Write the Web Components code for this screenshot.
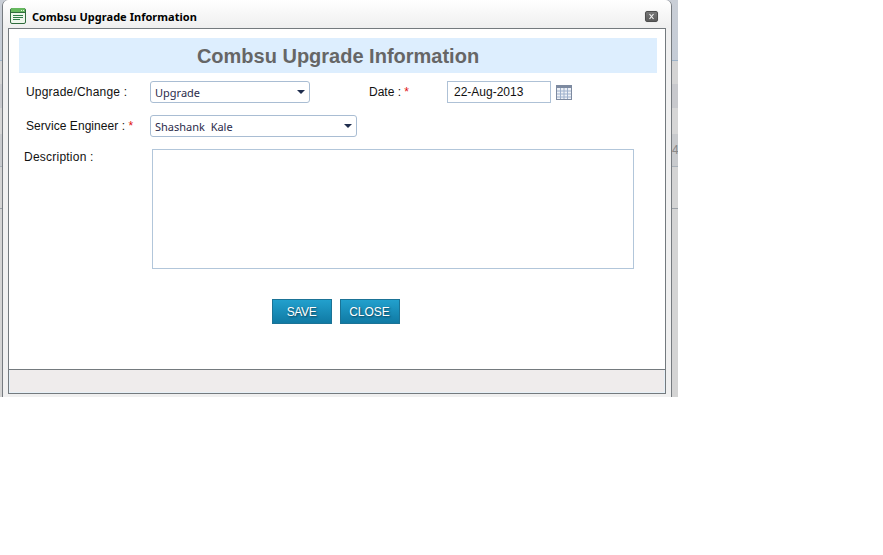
<!DOCTYPE html>
<html><head><meta charset="utf-8"><title>Combsu Upgrade Information</title>
<style>html,body{margin:0;padding:0;background:#fff;}</style></head>
<body>
<backdrop-page>
<modal-window heading="Combsu Upgrade Information">
  <upgrade-form></upgrade-form>
</modal-window>
</backdrop-page>
<script>
function def(name, css, html){
  customElements.define(name, class extends HTMLElement{
    constructor(){super();const s=this.attachShadow({mode:'open'});s.innerHTML='<style>'+css+'</style>'+(typeof html==='function'?html(this):html);}
  });
}
def('backdrop-page',`
:host{display:block;width:678px;height:397px;overflow:hidden;position:relative;box-sizing:border-box;padding-left:2px;
background:linear-gradient(#c9ced6 0,#c5ccd6 60px,#9db3c9 60px,#9db3c9 61px,#d4d4d4 61px,#d4d4d4 84px,#c8c9cd 84px,#c8c9cd 108px,#d6d6d6 108px,#d6d6d6 134px,#c8cacd 134px,#c8cacd 166px,#a9b1b9 166px,#a9b1b9 167px,#d4d4d4 167px,#d4d4d4 208px,#9aa0a6 208px,#9aa0a6 209px,#d4d4d4 209px);}
.n{position:absolute;left:672px;top:143px;font:12px "Liberation Sans",sans-serif;color:#888;}
`,`<slot></slot><span class="n">4</span>`);
def('window-icon',`
:host{display:block;width:16px;height:16px;flex:none;}svg{display:block}
`,`<svg width="16" height="16" viewBox="0 0 16 16"><rect x=".5" y=".5" width="15" height="15" rx="1.5" fill="#eef7ec" stroke="#2f6b3c"/><rect x="1" y="0" width="14" height="4.5" rx="1" fill="#66b85f"/><path d="M1 4.5h14" stroke="#2f6b3c"/><path d="M3 7.5h10M3 9.5h10M3 11.5h7" stroke="#2e7a48"/><path d="M11 2.5h1M13 2.5h1" stroke="#e6f5e0"/></svg>`);
def('close-button',`
:host{display:block;width:13px;height:11px;flex:none;border-radius:2px;background:linear-gradient(#777,#5c5c5c);border:1px solid #4e4e4e;box-sizing:border-box;box-shadow:0 0 1px #bbb;}
svg{display:block}
`,`<svg width="11" height="9" viewBox="0 0 11 9"><path d="M3.5 2l4 5M7.5 2l-4 5" stroke="#f2f2f2" stroke-width="1.2"/></svg>`);
def('modal-window',`
:host{display:flex;flex-direction:column;width:670px;height:397px;box-sizing:border-box;background:#f0f0f0;border-left:1px solid #767b80;border-right:1px solid #767b80;border-top-left-radius:6px;border-top-right-radius:6px;}
.bar{height:28px;flex:none;display:flex;align-items:center;padding:4px 13px 0 7px;background:linear-gradient(#fff,#efefef);border-radius:6px 6px 0 0;gap:6px;box-sizing:border-box;}
.t{font:bold 11px "Noto Sans",sans-serif;letter-spacing:.04px;color:#000;flex:1;white-space:nowrap;}
.body{margin:0 5px;height:366px;flex:none;border:1px solid #747a7e;box-sizing:border-box;width:658px;background:#fff;display:flex;flex-direction:column;}
.main{flex:1;min-height:0;}
.foot{height:23px;box-sizing:border-box;flex:none;background:#efecec;box-shadow:0 -1px 0 #747a7e;border-left:1px solid #e6f0f7;border-right:1px solid #e6f0f7;border-bottom:1px solid #e6f0f7;}
`,h=>`<div class="bar"><window-icon></window-icon><span class="t">${h.getAttribute('heading')}</span><close-button></close-button></div>
<div class="body"><div class="main"><slot></slot></div><div class="foot"></div></div>`);
def('form-label',`
:host{display:block;font:12px "Liberation Sans",sans-serif;color:#111;white-space:nowrap;}
b{color:#e01010;font-weight:normal;}
`,h=>`<slot></slot>${h.hasAttribute('req')?' <b>*</b>':''}`);
def('drop-select',`
:host{display:flex;align-items:center;height:22px;box-sizing:border-box;border:1px solid #a9bdd3;border-radius:3px;background:#fff;padding:1px 4px 0 4px;font:11px "Noto Sans",sans-serif;color:#2b2b4b;}
span{flex:1;white-space:pre;}
i{width:0;height:0;border-left:4px solid transparent;border-right:4px solid transparent;border-top:4px solid #1f2d4d;margin-top:-1px;}
`,`<span><slot></slot></span><i></i>`);
def('date-field',`
:host{display:flex;align-items:center;gap:5px;}
.f{width:104px;height:22px;box-sizing:border-box;border:1px solid #aec1d6;padding-left:6px;font:12px/20px "Liberation Sans",sans-serif;color:#111;}
svg{display:block}
`,`<div class="f"><slot></slot></div><svg width="16" height="15" viewBox="0 0 16 15"><rect x=".5" y=".5" width="15" height="14" fill="#eef1f6" stroke="#7d8aa0"/><rect x="1" y="1" width="14" height="2" fill="#7d8aa0"/><path d="M1 6h14M1 9h14M1 12h14M4.5 3v11M8 3v11M11.5 3v11" stroke="#9db0cc"/></svg>`);
def('action-button',`
:host{display:flex;align-items:center;justify-content:center;width:60px;height:25px;box-sizing:border-box;border:1px solid #1b7396;background:linear-gradient(#22a0cd,#107aa4);color:#fff;font:12px "Liberation Sans",sans-serif;text-shadow:1px 1px 2px #0a4258;}
`,`<slot></slot>`);
def('upgrade-form',`
:host{display:block;padding:9px 8px 0 10px;box-sizing:border-box;}
.hd{height:35px;background:#ddeefe;color:#666;font:bold 20px/37px "Liberation Sans",sans-serif;text-align:center;}
.r1,.r2{display:flex;align-items:center;}
.r1{margin-top:8px;height:22px;padding-left:7px;}
.r2{margin-top:12px;height:22px;padding-left:7px;}
.l1{width:124px;}
.s1{width:160px;}
.l2{width:78px;margin-left:59px;}
.s2{width:207px;}
.r3{display:flex;margin-top:12px;padding-left:5px;}
.l3{width:128px;padding-top:1px;letter-spacing:.23px;}
.ls1{letter-spacing:.2px;}
.ls2{letter-spacing:.06px;}
textarea{width:482px;height:120px;box-sizing:border-box;border:1px solid #b2c6da;margin:0;padding:0;resize:none;outline:none;display:block;}
.acts{display:flex;justify-content:center;gap:8px;margin-top:30px;padding-right:5px;}
.sv{letter-spacing:-.4px;}
`,`<div class="hd">Combsu Upgrade Information</div>
<div class="r1"><form-label class="l1 ls1">Upgrade/Change :</form-label><drop-select class="s1">Upgrade</drop-select><form-label class="l2" req>Date :</form-label><date-field>22-Aug-2013</date-field></div>
<div class="r2"><form-label class="l1 ls2" req>Service Engineer :</form-label><drop-select class="s2">Shashank  Kale</drop-select></div>
<div class="r3"><form-label class="l3">Description :</form-label><textarea></textarea></div>
<div class="acts"><action-button class="sv">SAVE</action-button><action-button>CLOSE</action-button></div>`);
</script>
</body></html>
